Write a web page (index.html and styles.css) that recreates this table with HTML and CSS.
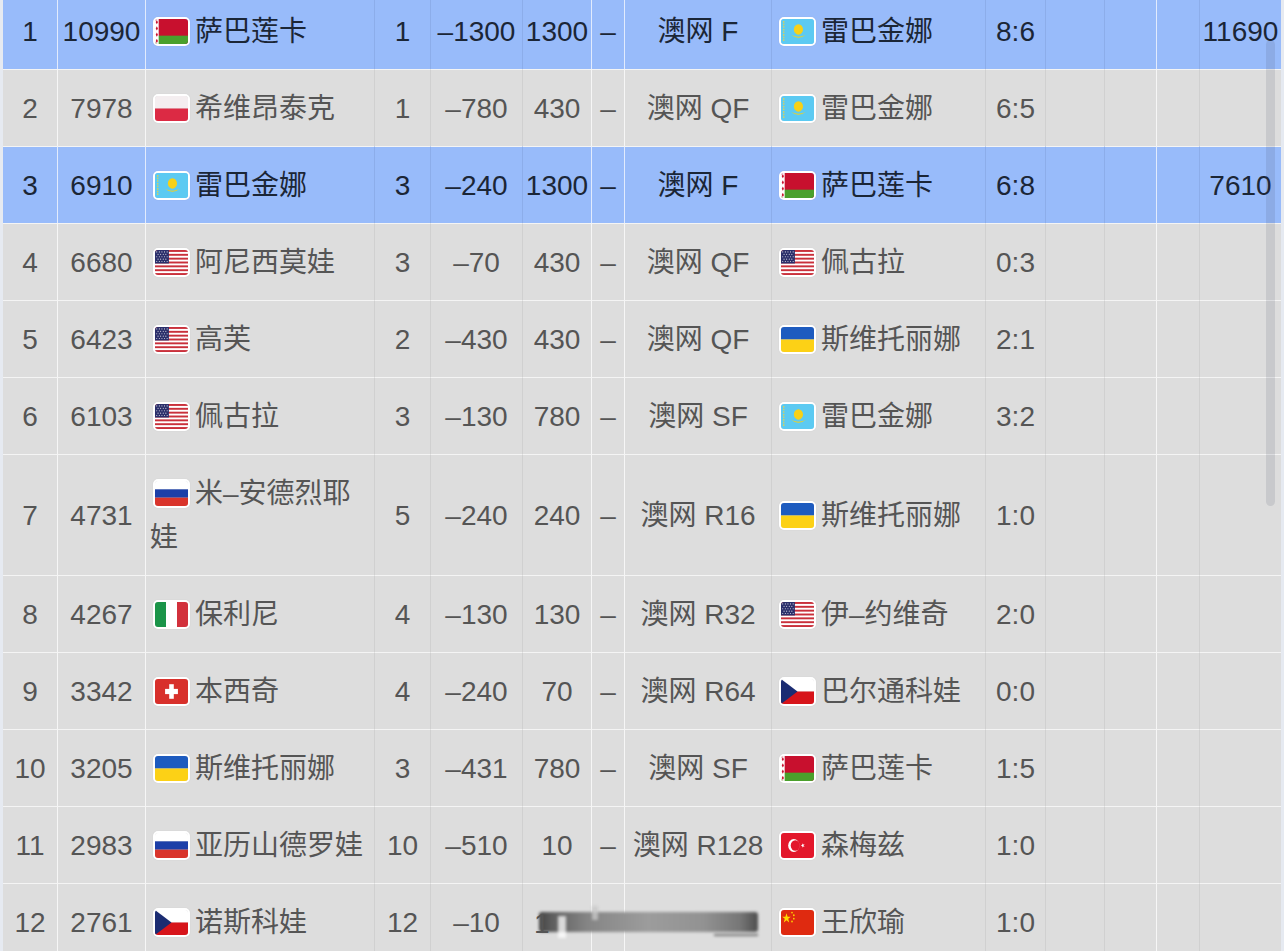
FILE: index.html
```html
<!DOCTYPE html>
<html lang="zh">
<head>
<meta charset="utf-8">
<title>排名</title>
<link rel="stylesheet" href="styles.css">
</head>
<body>
<svg class="defs" width="0" height="0" aria-hidden="true">
  <defs>
    <symbol id="f-by" viewBox="0 0 36 24" preserveAspectRatio="none">
      <rect width="36" height="24" fill="#c8102e"/>
      <rect y="16" width="36" height="8" fill="#4aa02c"/>
      <rect width="4" height="24" fill="#fff"/>
      <path d="M2 1l1.2 2-1.2 2-1.2-2zM2 7l1.2 2-1.2 2-1.2-2zM2 13l1.2 2-1.2 2-1.2-2zM2 19l1.2 2-1.2 2-1.2-2z" fill="#c8102e"/>
    </symbol>
    <symbol id="f-pl" viewBox="0 0 36 24" preserveAspectRatio="none">
      <rect width="36" height="12" fill="#f4eef0"/>
      <rect y="12" width="36" height="12" fill="#dc2a44"/>
    </symbol>
    <symbol id="f-kz" viewBox="0 0 36 24" preserveAspectRatio="none">
      <rect width="36" height="24" fill="#5ccaf2"/>
      <path d="M3 2v20" stroke="#f3d23a" stroke-width="1.2" stroke-dasharray="1.5 1"/>
      <circle cx="19" cy="10" r="5" fill="#f7d117"/>
      <path d="M11 15q8 4 16 0q-8 6-16 0z" fill="#f7d117"/>
    </symbol>
    <symbol id="f-us" viewBox="0 0 38 26" preserveAspectRatio="none">
      <rect width="38" height="26" fill="#fff"/>
      <g fill="#c9303b">
        <rect y="0" width="38" height="2"/><rect y="4" width="38" height="2"/><rect y="8" width="38" height="2"/>
        <rect y="12" width="38" height="2"/><rect y="16" width="38" height="2"/><rect y="20" width="38" height="2"/><rect y="24" width="38" height="2"/>
      </g>
      <rect width="16" height="14" fill="#2b2f6b"/>
      <g fill="#fff" opacity="0.85">
        <circle cx="2" cy="2" r="0.6"/><circle cx="5" cy="2" r="0.6"/><circle cx="8" cy="2" r="0.6"/><circle cx="11" cy="2" r="0.6"/><circle cx="14" cy="2" r="0.6"/>
        <circle cx="3.5" cy="4.5" r="0.6"/><circle cx="6.5" cy="4.5" r="0.6"/><circle cx="9.5" cy="4.5" r="0.6"/><circle cx="12.5" cy="4.5" r="0.6"/>
        <circle cx="2" cy="7" r="0.6"/><circle cx="5" cy="7" r="0.6"/><circle cx="8" cy="7" r="0.6"/><circle cx="11" cy="7" r="0.6"/><circle cx="14" cy="7" r="0.6"/>
        <circle cx="3.5" cy="9.5" r="0.6"/><circle cx="6.5" cy="9.5" r="0.6"/><circle cx="9.5" cy="9.5" r="0.6"/><circle cx="12.5" cy="9.5" r="0.6"/>
        <circle cx="2" cy="12" r="0.6"/><circle cx="5" cy="12" r="0.6"/><circle cx="8" cy="12" r="0.6"/><circle cx="11" cy="12" r="0.6"/><circle cx="14" cy="12" r="0.6"/>
      </g>
    </symbol>
    <symbol id="f-ua" viewBox="0 0 36 24" preserveAspectRatio="none">
      <rect width="36" height="12" fill="#1d5bbf"/>
      <rect y="12" width="36" height="12" fill="#fcd116"/>
    </symbol>
    <symbol id="f-ru" viewBox="0 0 36 24" preserveAspectRatio="none">
      <rect width="36" height="8" fill="#fff"/>
      <rect y="8" width="36" height="8" fill="#1c3fa8"/>
      <rect y="16" width="36" height="8" fill="#d9342b"/>
    </symbol>
    <symbol id="f-it" viewBox="0 0 36 24" preserveAspectRatio="none">
      <rect width="12" height="24" fill="#1a9448"/>
      <rect x="12" width="12" height="24" fill="#fff"/>
      <rect x="24" width="12" height="24" fill="#d2313c"/>
    </symbol>
    <symbol id="f-ch" viewBox="0 0 36 24" preserveAspectRatio="none">
      <rect width="36" height="24" fill="#d8302b"/>
      <rect x="15.5" y="5" width="5" height="14" fill="#fff"/>
      <rect x="11" y="9.5" width="14" height="5" fill="#fff"/>
    </symbol>
    <symbol id="f-cz" viewBox="0 0 36 24" preserveAspectRatio="none">
      <rect width="36" height="12" fill="#fff"/>
      <rect y="12" width="36" height="12" fill="#d7141a"/>
      <path d="M0 0L18 12L0 24z" fill="#1b2c72"/>
    </symbol>
    <symbol id="f-tr" viewBox="0 0 36 24" preserveAspectRatio="none">
      <rect width="36" height="24" fill="#e3172b"/>
      <circle cx="14" cy="12" r="6.2" fill="#fff"/>
      <circle cx="15.6" cy="12" r="5" fill="#e3172b"/>
      <path d="M21.5 12l4.2-1.4-2.6 3.6v-4.4l2.6 3.6z" fill="#fff"/>
    </symbol>
    <symbol id="f-cn" viewBox="0 0 36 24" preserveAspectRatio="none">
      <rect width="36" height="24" fill="#df2a10"/>
      <path d="M6 3l1.2 3.4h3.5l-2.8 2.1 1 3.4L6 9.8l-2.9 2.1 1-3.4-2.8-2.1h3.5z" fill="#ffd800"/>
      <circle cx="12" cy="2.5" r="0.9" fill="#ffd800"/>
      <circle cx="14" cy="5" r="0.9" fill="#ffd800"/>
      <circle cx="14" cy="8.3" r="0.9" fill="#ffd800"/>
      <circle cx="12" cy="11" r="0.9" fill="#ffd800"/>
    </symbol>
  </defs>
</svg>

<table class="rank">
  <colgroup>
    <col class="c-rank"><col class="c-pts"><col class="c-name"><col class="c-n"><col class="c-drop"><col class="c-gain"><col class="c-dash"><col class="c-ev"><col class="c-opp"><col class="c-score"><col class="c-e1"><col class="c-e2"><col class="c-e3"><col class="c-live">
  </colgroup>
  <tbody>
    <tr class="hl">
      <td class="wb">1</td><td class="wb">10990</td>
      <td class="name"><span class="flag"><svg><use href="#f-by"/></svg></span>萨巴莲卡</td>
      <td>1</td><td>–1300</td><td class="wb">1300</td><td class="wb">–</td><td>澳网 F</td>
      <td class="name"><span class="flag"><svg><use href="#f-kz"/></svg></span>雷巴金娜</td>
      <td>8:6</td><td></td><td class="wb"></td><td></td><td class="last">11690</td>
    </tr>
    <tr>
      <td class="wb">2</td><td class="wb">7978</td>
      <td class="name"><span class="flag"><svg><use href="#f-pl"/></svg></span>希维昂泰克</td>
      <td>1</td><td>–780</td><td class="wb">430</td><td class="wb">–</td><td>澳网 QF</td>
      <td class="name"><span class="flag"><svg><use href="#f-kz"/></svg></span>雷巴金娜</td>
      <td>6:5</td><td></td><td class="wb"></td><td></td><td class="last"></td>
    </tr>
    <tr class="hl">
      <td class="wb">3</td><td class="wb">6910</td>
      <td class="name"><span class="flag"><svg><use href="#f-kz"/></svg></span>雷巴金娜</td>
      <td>3</td><td>–240</td><td class="wb">1300</td><td class="wb">–</td><td>澳网 F</td>
      <td class="name"><span class="flag"><svg><use href="#f-by"/></svg></span>萨巴莲卡</td>
      <td>6:8</td><td></td><td class="wb"></td><td></td><td class="last">7610</td>
    </tr>
    <tr>
      <td class="wb">4</td><td class="wb">6680</td>
      <td class="name"><span class="flag"><svg><use href="#f-us"/></svg></span>阿尼西莫娃</td>
      <td>3</td><td>–70</td><td class="wb">430</td><td class="wb">–</td><td>澳网 QF</td>
      <td class="name"><span class="flag"><svg><use href="#f-us"/></svg></span>佩古拉</td>
      <td>0:3</td><td></td><td class="wb"></td><td></td><td class="last"></td>
    </tr>
    <tr>
      <td class="wb">5</td><td class="wb">6423</td>
      <td class="name"><span class="flag"><svg><use href="#f-us"/></svg></span>高芙</td>
      <td>2</td><td>–430</td><td class="wb">430</td><td class="wb">–</td><td>澳网 QF</td>
      <td class="name"><span class="flag"><svg><use href="#f-ua"/></svg></span>斯维托丽娜</td>
      <td>2:1</td><td></td><td class="wb"></td><td></td><td class="last"></td>
    </tr>
    <tr>
      <td class="wb">6</td><td class="wb">6103</td>
      <td class="name"><span class="flag"><svg><use href="#f-us"/></svg></span>佩古拉</td>
      <td>3</td><td>–130</td><td class="wb">780</td><td class="wb">–</td><td>澳网 SF</td>
      <td class="name"><span class="flag"><svg><use href="#f-kz"/></svg></span>雷巴金娜</td>
      <td>3:2</td><td></td><td class="wb"></td><td></td><td class="last"></td>
    </tr>
    <tr>
      <td class="wb">7</td><td class="wb">4731</td>
      <td class="name"><span class="flag"><svg><use href="#f-ru"/></svg></span>米–安德烈耶<br>娃</td>
      <td>5</td><td>–240</td><td class="wb">240</td><td class="wb">–</td><td>澳网 R16</td>
      <td class="name"><span class="flag"><svg><use href="#f-ua"/></svg></span>斯维托丽娜</td>
      <td>1:0</td><td></td><td class="wb"></td><td></td><td class="last"></td>
    </tr>
    <tr>
      <td class="wb">8</td><td class="wb">4267</td>
      <td class="name"><span class="flag"><svg><use href="#f-it"/></svg></span>保利尼</td>
      <td>4</td><td>–130</td><td class="wb">130</td><td class="wb">–</td><td>澳网 R32</td>
      <td class="name"><span class="flag"><svg><use href="#f-us"/></svg></span>伊–约维奇</td>
      <td>2:0</td><td></td><td class="wb"></td><td></td><td class="last"></td>
    </tr>
    <tr>
      <td class="wb">9</td><td class="wb">3342</td>
      <td class="name"><span class="flag"><svg><use href="#f-ch"/></svg></span>本西奇</td>
      <td>4</td><td>–240</td><td class="wb">70</td><td class="wb">–</td><td>澳网 R64</td>
      <td class="name"><span class="flag"><svg><use href="#f-cz"/></svg></span>巴尔通科娃</td>
      <td>0:0</td><td></td><td class="wb"></td><td></td><td class="last"></td>
    </tr>
    <tr>
      <td class="wb">10</td><td class="wb">3205</td>
      <td class="name"><span class="flag"><svg><use href="#f-ua"/></svg></span>斯维托丽娜</td>
      <td>3</td><td>–431</td><td class="wb">780</td><td class="wb">–</td><td>澳网 SF</td>
      <td class="name"><span class="flag"><svg><use href="#f-by"/></svg></span>萨巴莲卡</td>
      <td>1:5</td><td></td><td class="wb"></td><td></td><td class="last"></td>
    </tr>
    <tr>
      <td class="wb">11</td><td class="wb">2983</td>
      <td class="name"><span class="flag"><svg><use href="#f-ru"/></svg></span>亚历山德罗娃</td>
      <td>10</td><td>–510</td><td class="wb">10</td><td class="wb">–</td><td>澳网 R128</td>
      <td class="name"><span class="flag"><svg><use href="#f-tr"/></svg></span>森梅兹</td>
      <td>1:0</td><td></td><td class="wb"></td><td></td><td class="last"></td>
    </tr>
    <tr>
      <td class="wb">12</td><td class="wb">2761</td>
      <td class="name"><span class="flag"><svg><use href="#f-cz"/></svg></span>诺斯科娃</td>
      <td>12</td><td>–10</td><td class="wb"></td><td class="wb"></td><td></td>
      <td class="name"><span class="flag"><svg><use href="#f-cn"/></svg></span>王欣瑜</td>
      <td>1:0</td><td></td><td class="wb"></td><td></td><td class="last"></td>
    </tr>
  </tbody>
</table>

<div class="redact" aria-hidden="true"><span class="digit">1</span><span class="streak s1"></span><span class="streak s2"></span><span class="streak s3"></span></div>
<div class="scrollbar" aria-hidden="true"></div>
</body>
</html>
```

FILE: styles.css
```css
html, body {
  margin: 0;
  padding: 0;
}

body {
  background: #e6eaf1;
  width: 1284px;
  height: 951px;
  overflow: hidden;
  position: relative;
  font-family: "Liberation Sans", "Noto Sans CJK SC", sans-serif;
}

.defs {
  position: absolute;
  width: 0;
  height: 0;
  overflow: hidden;
}

.rank {
  table-layout: fixed;
  border-collapse: separate;
  border-spacing: 0;
  width: 1278px;
  margin: -8px 0 0 3px;
  font-size: 28px;
  color: #555555;
}

.c-rank { width: 55px; }
.c-pts { width: 88px; }
.c-name { width: 229px; }
.c-n { width: 56px; }
.c-drop { width: 92px; }
.c-gain { width: 69px; }
.c-dash { width: 33px; }
.c-ev { width: 147px; }
.c-opp { width: 214px; }
.c-score { width: 60px; }
.c-e1 { width: 59px; }
.c-e2 { width: 52px; }
.c-e3 { width: 43px; }
.c-live { width: 81px; }

.rank td {
  background: #dddddd;
  border-top: 1px solid #f4f4f4;
  border-right: 1px solid #d0d0d0;
  padding: 17px 0 15px;
  line-height: 44px;
  text-align: center;
  white-space: nowrap;
  overflow: hidden;
  font-weight: 400;
}

.rank td.wb {
  border-right-color: #f6f6f6;
}

.rank td.last {
  border-right: none;
}

.rank tr.hl td {
  background: #98bbfa;
  color: #1b2636;
  border-right-color: #8cadea;
}

.rank tr.hl td.wb {
  border-right-color: #e2ebfd;
}

.rank td.name {
  text-align: left;
  padding-left: 4px;
  white-space: normal;
}

.flag {
  display: inline-block;
  width: 33px;
  height: 25px;
  margin: 0 5px 0 3px;
  border: 2px solid #ffffff;
  border-radius: 5px;
  overflow: hidden;
  vertical-align: -5px;
  box-shadow: 0 0 1px rgba(0, 0, 0, 0.15);
}

.flag svg {
  display: block;
  width: 33px;
  height: 25px;
}

.redact {
  position: absolute;
  left: 534px;
  top: 902px;
  width: 226px;
  height: 40px;
}

.redact::before {
  content: "";
  position: absolute;
  left: 5px;
  right: 2px;
  top: 10px;
  height: 20px;
  background: linear-gradient(to right, #444444 0%, #5e5e5e 6%, #858585 22%, #9c9c9c 50%, #929292 75%, #767676 92%, #4e4e4e 100%);
  filter: blur(1.5px);
  border-radius: 3px;
}

.digit {
  position: absolute;
  left: 0;
  top: 2px;
  line-height: 40px;
  font-size: 28px;
  color: #555;
}

.streak {
  position: absolute;
  filter: blur(1.5px);
}

.s1 {
  left: 24px;
  top: 14px;
  width: 8px;
  height: 22px;
  background: rgba(255, 255, 255, 0.75);
}

.s2 {
  left: 58px;
  top: 4px;
  width: 6px;
  height: 14px;
  background: rgba(200, 200, 200, 0.8);
}

.s3 {
  left: 180px;
  top: 32px;
  width: 44px;
  height: 2px;
  background: rgba(70, 70, 70, 0.7);
}

.scrollbar {
  position: absolute;
  left: 1266px;
  top: 40px;
  width: 9px;
  height: 466px;
  border-radius: 5px;
  background: rgba(60, 70, 90, 0.13);
}
```
